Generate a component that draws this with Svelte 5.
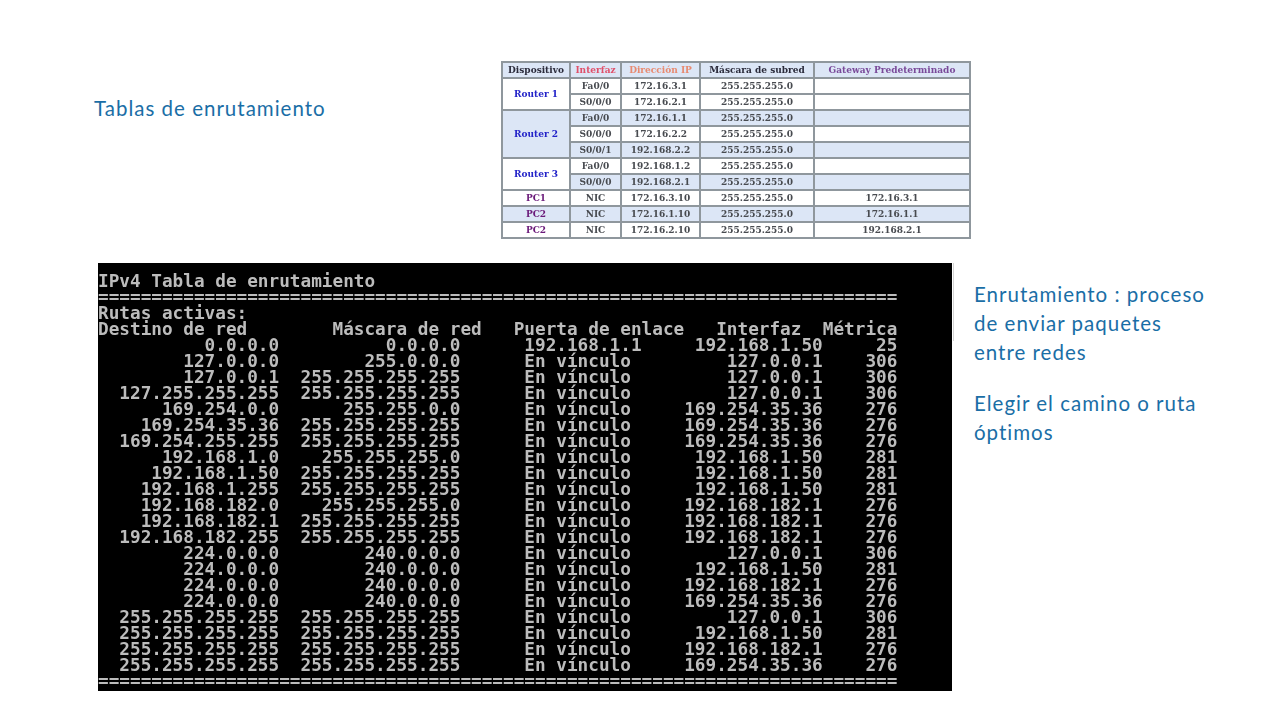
<script>
    const all = "255.255.255.255";
    const link = "En vínculo";
    const routes = [
        ["0.0.0.0", "0.0.0.0", "192.168.1.1", "192.168.1.50", 25],
        ["127.0.0.0", "255.0.0.0", link, "127.0.0.1", 306],
        ["127.0.0.1", all, link, "127.0.0.1", 306],
        ["127.255.255.255", all, link, "127.0.0.1", 306],
        ["169.254.0.0", "255.255.0.0", link, "169.254.35.36", 276],
        ["169.254.35.36", all, link, "169.254.35.36", 276],
        ["169.254.255.255", all, link, "169.254.35.36", 276],
        ["192.168.1.0", "255.255.255.0", link, "192.168.1.50", 281],
        ["192.168.1.50", all, link, "192.168.1.50", 281],
        ["192.168.1.255", all, link, "192.168.1.50", 281],
        ["192.168.182.0", "255.255.255.0", link, "192.168.182.1", 276],
        ["192.168.182.1", all, link, "192.168.182.1", 276],
        ["192.168.182.255", all, link, "192.168.182.1", 276],
        ["224.0.0.0", "240.0.0.0", link, "127.0.0.1", 306],
        ["224.0.0.0", "240.0.0.0", link, "192.168.1.50", 281],
        ["224.0.0.0", "240.0.0.0", link, "192.168.182.1", 276],
        ["224.0.0.0", "240.0.0.0", link, "169.254.35.36", 276],
        [all, all, link, "127.0.0.1", 306],
        [all, all, link, "192.168.1.50", 281],
        [all, all, link, "192.168.182.1", 276],
        [all, all, link, "169.254.35.36", 276],
    ];
    const rule = "=".repeat(75);
    // columns are fixed width, like the real console output
    const lines = [
        "IPv4 Tabla de enrutamiento",
        rule,
        "Rutas activas:",
        "Destino de red        Máscara de red   Puerta de enlace   Interfaz  Métrica",
        ...routes.map(([dest, mask, gw, iface, metric]) =>
            dest.padStart(17) + "  " + mask.padStart(15) + "      " + gw.padEnd(11) +
            iface.padStart(17) + String(metric).padStart(7)
        ),
        rule,
    ];

    const rows = [
        { dev: "Router 1", span: 2, kind: "router", iface: "Fa0/0", ip: "172.16.3.1", gw: "", shade: false, devShade: false },
        { iface: "S0/0/0", ip: "172.16.2.1", gw: "", shade: false },
        { dev: "Router 2", span: 3, kind: "router", iface: "Fa0/0", ip: "172.16.1.1", gw: "", shade: true, devShade: true },
        { iface: "S0/0/0", ip: "172.16.2.2", gw: "", shade: false },
        { iface: "S0/0/1", ip: "192.168.2.2", gw: "", shade: true },
        { dev: "Router 3", span: 2, kind: "router", iface: "Fa0/0", ip: "192.168.1.2", gw: "", shade: false, devShade: false },
        { iface: "S0/0/0", ip: "192.168.2.1", gw: "", shade: true },
        { dev: "PC1", span: 1, kind: "pc", iface: "NIC", ip: "172.16.3.10", gw: "172.16.3.1", shade: false, devShade: false },
        { dev: "PC2", span: 1, kind: "pc", iface: "NIC", ip: "172.16.1.10", gw: "172.16.1.1", shade: true, devShade: true },
        { dev: "PC2", span: 1, kind: "pc", iface: "NIC", ip: "172.16.2.10", gw: "192.168.2.1", shade: false, devShade: false },
    ];
</script>

<div class="slide">
    <section class="top">
        <p class="heading">Tablas de enrutamiento</p>
        <table>
            <thead>
                <tr>
                    <th class="c1">Dispositivo</th>
                    <th class="c2 iface">Interfaz</th>
                    <th class="c3 addr">Dirección IP</th>
                    <th class="c4">Máscara de subred</th>
                    <th class="c5 gate">Gateway Predeterminado</th>
                </tr>
            </thead>
            <tbody>
                {#each rows as row}
                    <tr class:shade={row.shade}>
                        {#if row.dev}
                            <td rowspan={row.span} class="dev {row.kind}" class:shade={row.devShade}>{row.dev}</td>
                        {/if}
                        <td>{row.iface}</td>
                        <td>{row.ip}</td>
                        <td>255.255.255.0</td>
                        <td>{row.gw}</td>
                    </tr>
                {/each}
            </tbody>
        </table>
    </section>

    <section class="bottom">
        <div class="console">
            <pre>{lines.join("\n")}</pre>
        </div>
        <div class="notes">
            <p>Enrutamiento : proceso de enviar paquetes entre redes</p>
            <p>Elegir el camino o ruta óptimos</p>
        </div>
    </section>
</div>

<style>
    :global(body) {
        background: #fff;
    }
    .slide {
        width: 1280px;
        height: 720px;
        overflow: hidden;
        background: #fff;
        font-family: Lato, "Open Sans", sans-serif;
        color: #1a6ea6;
    }
    .top {
        display: flex;
        align-items: flex-start;
        padding: 61px 0 0 94px;
    }
    .heading {
        width: 407px;
        margin: 33px 0 0;
        font-size: 20.5px;
        line-height: 28px;
        letter-spacing: 1px;
    }
    table {
        width: 470px;
        height: 178px;
        table-layout: fixed;
        border-collapse: separate;
        border-spacing: 2px;
        background: #8f979d;
        font-family: "DejaVu Serif", serif;
        font-size: 9px;
        font-weight: bold;
        color: #484b50;
        text-align: center;
        filter: blur(0.5px);
    }
    th,
    td {
        padding: 0;
        height: 14px;
        line-height: 14px;
        overflow: hidden;
        white-space: nowrap;
        background: #fff;
    }
    th {
        background: #dce6f6;
        color: #2a2a3a;
    }
    .c1 { width: 66px; }
    .c2 { width: 49px; }
    .c3 { width: 77px; }
    .c4 { width: 112px; }
    .iface { color: #e0506a; }
    .addr { color: #e88a70; }
    .gate { color: #7a4a9a; }
    tr.shade td,
    td.shade {
        background: #dce6f6;
    }
    .router { color: #2222c8; }
    .pc { color: #6b1a7a; }
    .bottom {
        display: flex;
        align-items: flex-start;
        gap: 22px;
        padding: 24px 0 0 98px;
    }
    .console {
        position: relative;
        width: 854px;
        height: 428px;
        flex: none;
        background: #000;
    }
    .console::after {
        content: "";
        position: absolute;
        right: -2px;
        top: 0;
        width: 1px;
        height: 78px;
        background: #d4d4d4;
    }
    pre {
        height: 100%;
        margin: 0;
        padding-top: 10px;
        box-sizing: border-box;
        overflow: hidden;
        font-family: "DejaVu Sans Mono", monospace;
        font-size: 17.72px;
        font-weight: bold;
        line-height: 16px;
        color: #bcbcbc;
        filter: blur(0.35px);
    }
    .notes {
        width: 236px;
        padding-top: 17px;
        font-size: 20.5px;
        line-height: 29px;
        letter-spacing: 1px;
    }
    .notes p {
        margin: 0 0 22px;
    }
</style>
